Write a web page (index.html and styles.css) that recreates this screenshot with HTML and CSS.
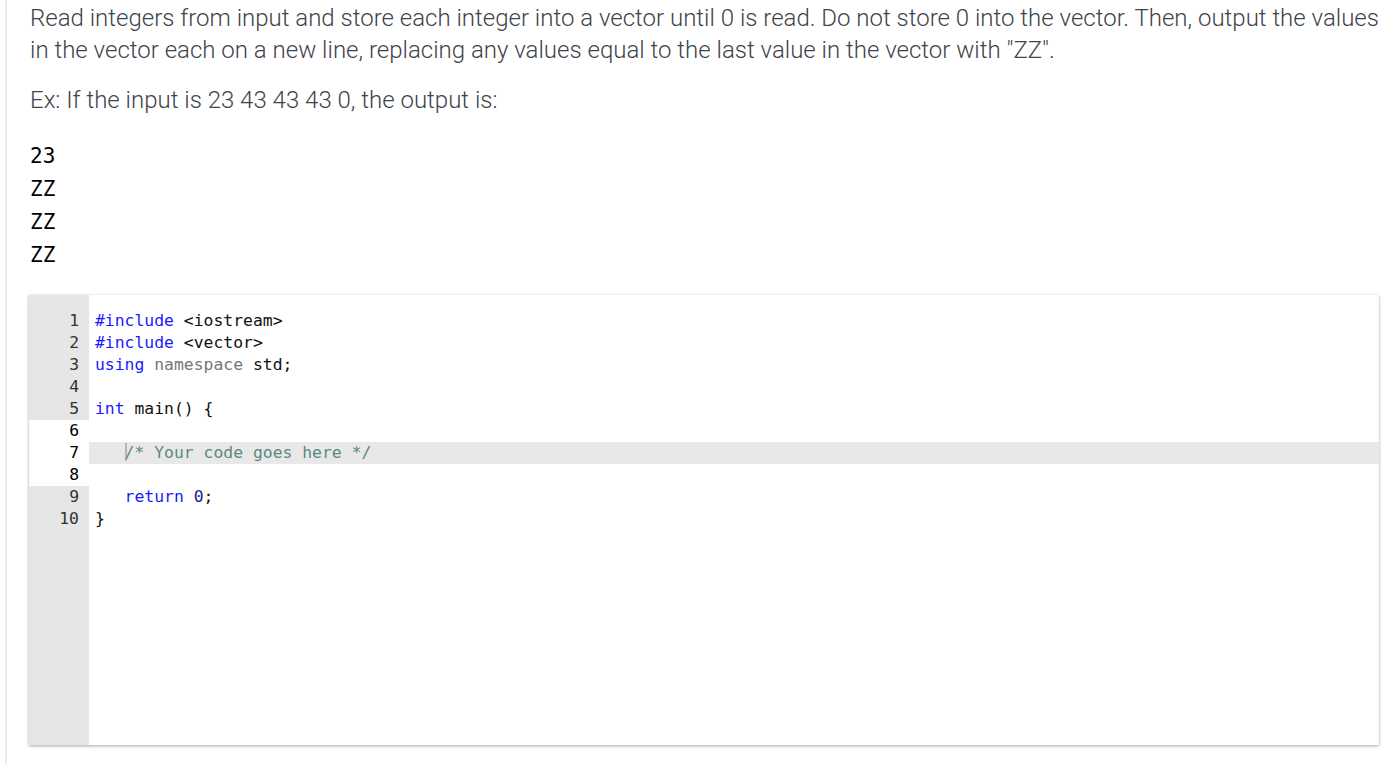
FILE: index.html
```html
<!DOCTYPE html>
<html>
<head>
<meta charset="utf-8">
<link rel="stylesheet" href="styles.css">
</head>
<body>
<div class="page">
  <div class="prompt">
    <p class="text">Read integers from input and store each integer into a vector until 0 is read. Do not store 0 into the vector. Then, output the values in the vector each on a new line, replacing any values equal to the last value in the vector with "ZZ".</p>
    <p class="text">Ex: If the input is 23 43 43 43 0, the output is:</p>
    <pre class="output">23
ZZ
ZZ
ZZ</pre>
  </div>
  <div class="editor">
    <div class="gutter">
      <div class="ln">1</div>
      <div class="ln">2</div>
      <div class="ln">3</div>
      <div class="ln">4</div>
      <div class="ln">5</div>
      <div class="ln ln-light">6</div>
      <div class="ln ln-light">7</div>
      <div class="ln ln-light">8</div>
      <div class="ln">9</div>
      <div class="ln">10</div>
    </div>
    <div class="code">
      <div class="line"><span class="kw">#include</span> &lt;iostream&gt;</div>
      <div class="line"><span class="kw">#include</span> &lt;vector&gt;</div>
      <div class="line"><span class="kw">using</span> <span class="ns">namespace</span> std;</div>
      <div class="line"> </div>
      <div class="line"><span class="kw">int</span> main() {</div>
      <div class="line"> </div>
      <div class="line active">   <span class="cursor"></span><span class="cm">/* Your code goes here */</span></div>
      <div class="line"> </div>
      <div class="line">   <span class="kw">return</span> <span class="num">0</span>;</div>
      <div class="line">}</div>
    </div>
  </div>
</div>
</body>
</html>
```
FILE: styles.css
```css
html, body {
  margin: 0;
  padding: 0;
  background: #ffffff;
}
body {
  width: 1385px;
  height: 764px;
  overflow: hidden;
}
.page {
  margin-left: 5px;
  height: 764px;
  border-left: 2px solid #ececec;
  padding-left: 22px;
  padding-right: 6px;
  box-sizing: border-box;
}
.prompt {
  padding-top: 2px;
  margin-right: -6px;
}
.text {
  font-family: Roboto, "Liberation Sans", sans-serif;
  font-weight: 300;
  font-size: 24px;
  line-height: 32px;
  color: #3f434a;
  margin: 0 0 18px 1px;
}
.output {
  font-family: "DejaVu Sans Mono", monospace;
  font-size: 21px;
  line-height: 33px;
  color: #000;
  margin: 24px 0 0 1px;
}
.editor {
  margin-top: 23px;
  display: flex;
  height: 450px;
  background: #fff;
  box-shadow: 0 1px 3px rgba(0,0,0,0.35);
  font-family: "DejaVu Sans Mono", monospace;
  font-size: 16.4px;
}
.gutter {
  width: 60px;
  flex: none;
  background: #e6e6e6;
  padding-top: 15px;
}
.ln {
  height: 22px;
  line-height: 22px;
  text-align: right;
  padding-right: 10px;
  color: #333;
}
.ln-light {
  background: #ffffff;
  color: #000;
}
.code {
  flex: 1;
  padding-top: 15px;
}
.line {
  height: 22px;
  line-height: 22px;
  white-space: pre;
  padding-left: 6px;
  color: #111;
}
.line.active {
  background: #e8e8e8;
}
.kw { color: #1a1aff; }
.ns { color: #777; }
.cm { color: #5b8a80; }
.num { color: #1a1a8a; }
.cursor {
  display: inline-block;
  width: 2px;
  height: 18px;
  background: #b5b5b5;
  vertical-align: -3px;
  margin-right: -2px;
}
```
